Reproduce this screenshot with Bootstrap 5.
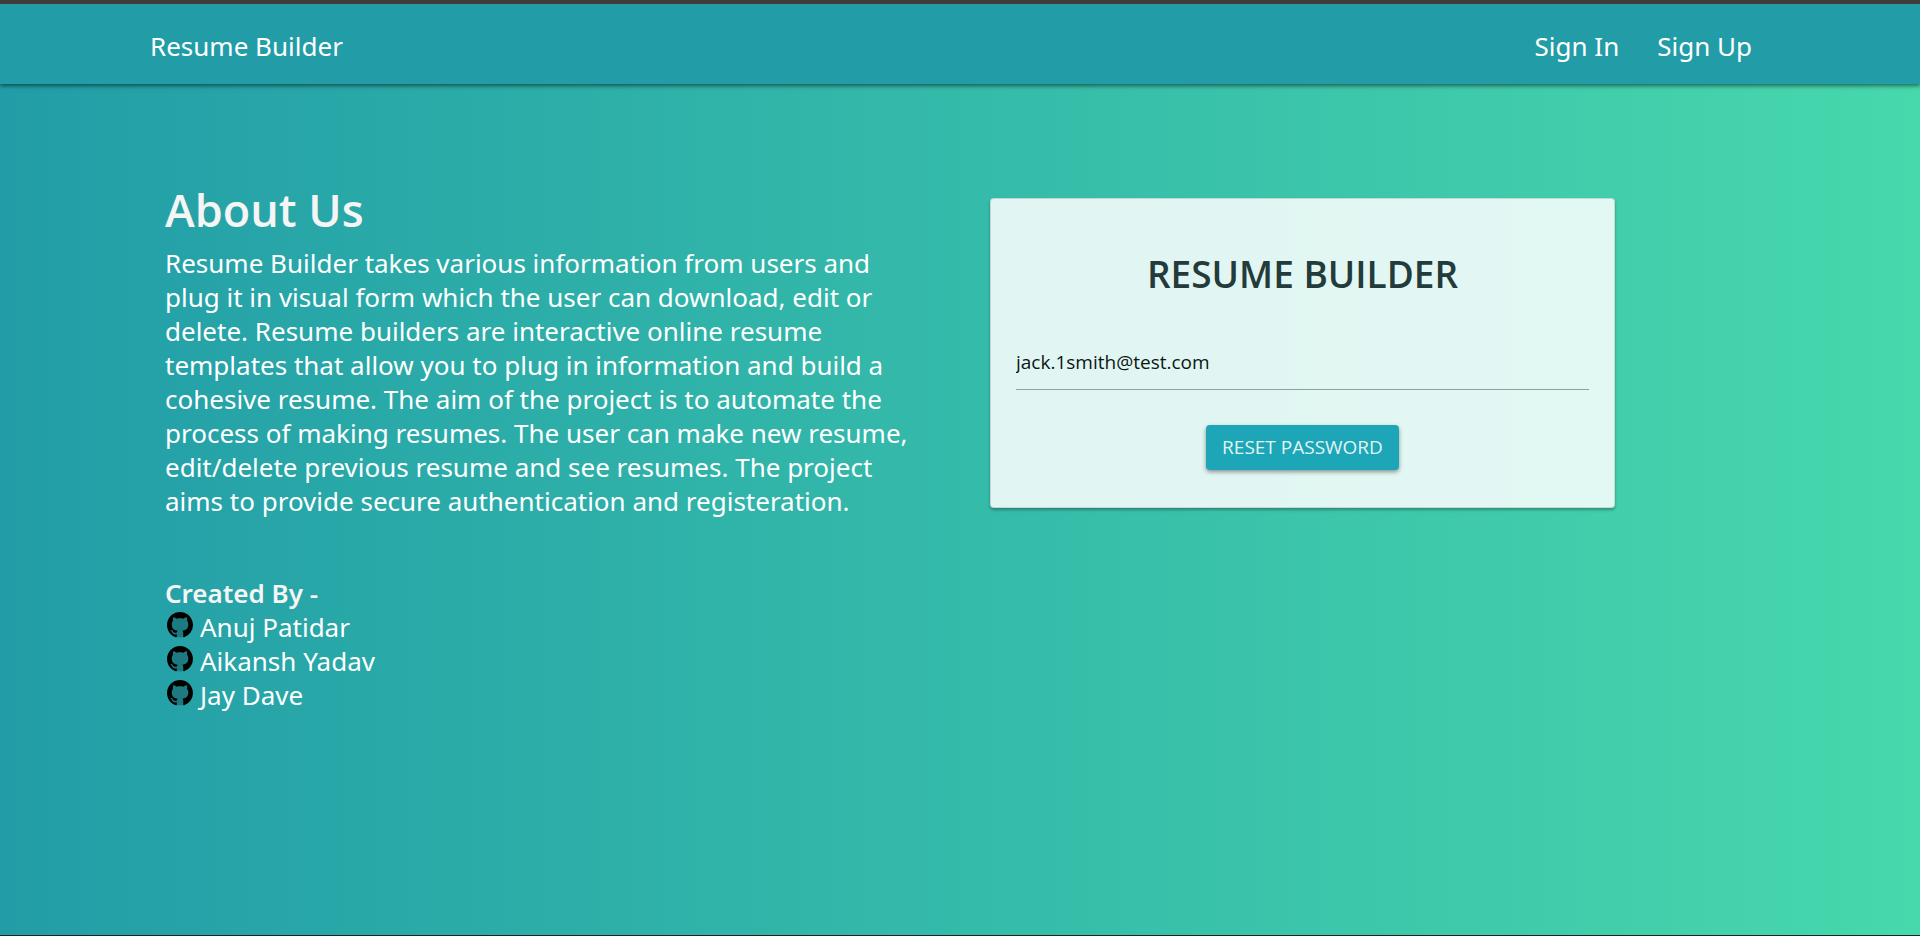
<!DOCTYPE html>
<html lang="en">
<head>
<meta charset="utf-8">
<meta name="viewport" content="width=device-width, initial-scale=1">
<title>Resume Builder</title>
<link rel="stylesheet" href="https://cdn.jsdelivr.net/npm/bootstrap@5.3.0/dist/css/bootstrap.min.css">
<style>
  body {
    font-family: "Noto Sans", "Open Sans", sans-serif;
    font-size: 26px;
    font-weight: 400;
    line-height: 34px;
    color: #fff;
    background: linear-gradient(to right, #229da7, #47d8ac);
    border-bottom: 1px solid #222;
  }
  a { color: #fff; text-decoration: none; }
  .page-gutter { padding-left: 150px; padding-right: 150px; }
  .site-bar {
    min-height: 84px;
    background: #229da7;
    border-top: 4px solid #3f3c3c;
    box-shadow: 0 2px 4px rgba(0, 0, 0, .5);
  }
  .site-bar .navbar-nav { gap: 38px; padding-right: 18px; }
  .intro { padding-top: 98px; }
  .intro-col { padding: 0 35px 0 15px; }
  .about-title { font-family: "Open Sans", "Noto Sans", sans-serif; font-size: 45px; line-height: 56px; font-weight: 600; color: #f5f5f5; }
  .about-text { margin-bottom: 58px; }
  .maker-title { font-size: 26px; line-height: 34px; font-weight: 600; color: #f5f5f5; }
  .maker-link { gap: 7px; padding-left: 2px; }
  .gh-icon { width: 26px; height: 26px; margin-top: 2px; }
  .reset-card {
    max-width: 625px;
    margin: 16px 0 0 30px;
    padding: 53px 25px 37px;
    font-family: "Open Sans", "Noto Sans", sans-serif;
    background: rgba(255, 255, 255, .85);
    border: 1px solid rgba(0, 0, 0, .12);
    border-radius: 4px;
    box-shadow: 0 2px 3px rgba(0, 0, 0, .3);
  }
  .reset-title { font-size: 37px; line-height: 44px; font-weight: 600; color: #243b3b; margin-bottom: 41px; }
  .line-field {
    height: 53px;
    padding: 0 0 2px;
    font-size: 19px;
    color: #0c1616;
    background: transparent;
    border: 0;
    border-bottom: 1px solid #8ca3a1;
    border-radius: 0;
    margin-bottom: 35px;
  }
  .line-field:focus { background: transparent; box-shadow: none; }
  .reset-btn {
    height: 45px;
    padding: 0 16px;
    font-size: 19px;
    color: #e0f5f3;
    background: #1ca6b7;
    border: 0;
    border-radius: 4px;
    box-shadow: 0 2px 4px rgba(0, 0, 0, .4);
  }
</style>
</head>
<body class="min-vh-100">
<nav class="site-bar page-gutter navbar navbar-expand pt-1 pb-0">
  <a href="#">Resume Builder</a>
  <ul class="navbar-nav ms-auto">
    <li><a href="#">Sign In</a></li>
    <li><a href="#">Sign Up</a></li>
  </ul>
</nav>
<svg class="d-none" aria-hidden="true">
  <symbol id="github" viewBox="0 0 16 16"><circle cx="8" cy="8" r="7.6" fill="#1d7a80"/><path d="M8 0C3.58 0 0 3.58 0 8c0 3.54 2.29 6.53 5.47 7.59.4.07.55-.17.55-.38 0-.19-.01-.82-.01-1.49-2.01.37-2.53-.49-2.69-.94-.09-.23-.48-.94-.82-1.13-.28-.15-.68-.52-.01-.53.63-.01 1.08.58 1.23.82.72 1.21 1.87.87 2.33.66.07-.52.28-.87.51-1.07-1.78-.2-3.64-.89-3.64-3.95 0-.87.31-1.59.82-2.15-.08-.2-.36-1.02.08-2.12 0 0 .67-.21 2.2.82.64-.18 1.32-.27 2-.27s1.36.09 2 .27c1.53-1.04 2.2-.82 2.2-.82.44 1.1.16 1.92.08 2.12.51.56.82 1.27.82 2.15 0 3.07-1.87 3.75-3.65 3.95.29.25.54.73.54 1.48 0 1.07-.01 1.93-.01 2.2 0 .21.15.46.55.38A8.01 8.01 0 0 0 16 8c0-4.42-3.58-8-8-8z"/></symbol>
</svg>
<main class="intro page-gutter">
  <div class="row gx-0">
    <section class="col-6 intro-col">
      <h1 class="about-title mb-2">About Us</h1>
      <p class="about-text">Resume Builder takes various information from users and plug it in visual form which the user can download, edit or delete. Resume builders are interactive online resume templates that allow you to plug in information and build a cohesive resume. The aim of the project is to automate the process of making resumes. The user can make new resume, edit/delete previous resume and see resumes. The project aims to provide secure authentication and registeration.</p>
      <h2 class="maker-title mb-0">Created By -</h2>
      <ul class="list-unstyled mb-0">
        <li><a class="maker-link d-flex" href="#"><svg class="gh-icon" aria-hidden="true"><use href="#github"/></svg>Anuj Patidar</a></li>
        <li><a class="maker-link d-flex" href="#"><svg class="gh-icon" aria-hidden="true"><use href="#github"/></svg>Aikansh Yadav</a></li>
        <li><a class="maker-link d-flex" href="#"><svg class="gh-icon" aria-hidden="true"><use href="#github"/></svg>Jay Dave</a></li>
      </ul>
    </section>
    <section class="col-6">
      <form class="reset-card text-center">
        <h2 class="reset-title">RESUME BUILDER</h2>
        <input class="line-field form-control" type="email" aria-label="Email" value="jack.1smith@test.com">
        <button class="reset-btn btn" type="button">RESET PASSWORD</button>
      </form>
    </section>
  </div>
</main>
<script src="https://cdn.jsdelivr.net/npm/bootstrap@5.3.0/dist/js/bootstrap.bundle.min.js"></script>
</body>
</html>
